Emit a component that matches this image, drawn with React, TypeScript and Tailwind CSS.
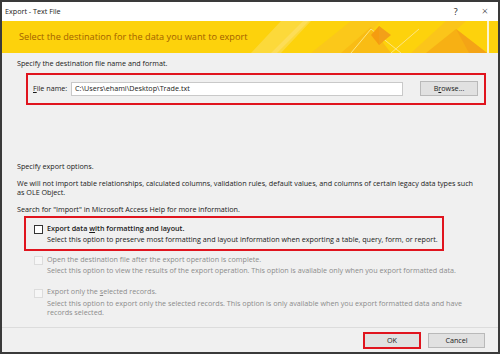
import React from "react";

function Banner() {
  return (
    <div className="relative flex h-[32px] items-center bg-[#fdd20c] pl-[17px]">
      <p className="text-[9.2px] text-[#a25f00]">Select the destination for the data you want to export</p>
      <svg className="absolute right-[11px] top-0" width="236" height="32" viewBox="0 0 236 32">
        <polygon points="0,32 30,0 60,0 30,32" fill="#fcd93a" />
        <polygon points="20,32 52,0 58,0 26,32" fill="#fde06a" opacity="0.6" />
        <polygon points="60,32 100,0 130,0 100,32" fill="#fbc81a" />
        <polygon points="90,32 120,6 140,32" fill="#f9bc14" />
        <polyline points="100,32 120,8 150,32" fill="none" stroke="#fde582" strokeWidth="1" />
        <polygon points="120,14 128,5 138,14 128,24" fill="#f59c10" />
        <polygon points="128,5 140,14 128,24" fill="#f3a018" />
        <polyline points="140,32 168,8" fill="none" stroke="#fde582" strokeWidth="1" />
        <polygon points="160,32 195,0 215,0 180,32" fill="#fbc51a" />
        <polygon points="175,32 205,8 236,32" fill="#f7b014" />
        <polygon points="205,8 236,32 218,32" fill="#f4a416" />
      </svg>
      <div className="absolute right-[9px] top-0 h-full w-[2px] bg-[#fbf3d0]" />
    </div>
  );
}

function Check({ disabled }: { disabled?: boolean }) {
  return (
    <div className={`mt-[2px] h-[9px] w-[9px] shrink-0 border ${disabled ? "border-[#dcdcdc] bg-[#f6f6f6]" : "border-[#333] bg-white"}`} />
  );
}

export default function App() {
  return (
    <div className="w-[500px] h-[354px] overflow-hidden border-[2px] border-[#3a3a3a] bg-[#f0f0f0] text-[7.2px] text-[#1a1a1a] flex flex-col" style={{ fontFamily: '"Open Sans", "Noto Sans", sans-serif' }}>
      <div className="flex h-[19px] shrink-0 items-center justify-between bg-white pl-[3px] pr-[10px]">
        <p className="text-[7.2px]">Export - Text File</p>
        <div className="flex items-center gap-[24px] text-[9px] text-[#222]">
          <span>?</span>
          <span className="text-[11px] font-light">×</span>
        </div>
      </div>

      <Banner />

      <div className="flex flex-1 flex-col px-[15px] pt-[5px]">
        <p>Specify the destination file name and format.</p>
        <div className="ml-[9px] mt-[4px] flex h-[32px] w-[460px] items-center border-[2px] border-[#e0141e] pl-[5px]">
          <span className="w-[38px]"><u>F</u>ile name:</span>
          <div className="flex h-[14px] w-[332px] items-center border border-[#c9c9c9] bg-white pl-[3px]">C:\Users\ehami\Desktop\Trade.txt</div>
          <div className="ml-[17px] flex h-[15px] w-[58px] items-center justify-center border border-[#b9b9b9] bg-[#e1e1e1]">B<u>r</u>owse...</div>
        </div>

        <p className="mt-[56px]">Specify export options.</p>
        <p className="mt-[7px] leading-[9px]">We will not import table relationships, calculated columns, validation rules, default values, and columns of certain legacy data types such<br />as OLE Object.</p>
        <p className="mt-[7px]">Search for "Import" in Microsoft Access Help for more information.</p>

        <div className="ml-[7px] mt-[2px] flex h-[35px] w-[420px] items-start gap-[4px] border-[2px] border-[#e0141e] pl-[8px] pt-[5px]">
          <Check />
          <div className="leading-[11px]">
            <p className="font-semibold">Export data <u>w</u>ith formatting and layout.</p>
            <p>Select this option to preserve most formatting and layout information when exporting a table, query, form, or report.</p>
          </div>
        </div>

        <div className="ml-[17px] mt-[3px] flex items-start gap-[4px] text-[#8c8c8c]">
          <Check disabled />
          <div className="leading-[11px]">
            <p>Open the destination file after the export operation is complete.</p>
            <p>Select this option to view the results of the export operation. This option is available only when you export formatted data.</p>
          </div>
        </div>

        <div className="ml-[17px] mt-[11px] flex items-start gap-[4px] text-[#8c8c8c]">
          <Check disabled />
          <div className="leading-[9px]">
            <p className="mb-[3px]">Export only the <u>s</u>elected records.</p>
            <p>Select this option to export only the selected records. This option is only available when you export formatted data and have<br />records selected.</p>
          </div>
        </div>
      </div>

      <div className="flex h-[25px] shrink-0 items-center justify-end gap-[7px] border-t border-[#dcdcdc] pr-[13px]">
        <div className="flex h-[17px] w-[58px] items-center justify-center border-[2px] border-[#e0141e] bg-[#e1e1e1]">OK</div>
        <div className="flex h-[15px] w-[57px] items-center justify-center border border-[#b9b9b9] bg-[#e1e1e1]">Cancel</div>
      </div>
    </div>
  );
}
